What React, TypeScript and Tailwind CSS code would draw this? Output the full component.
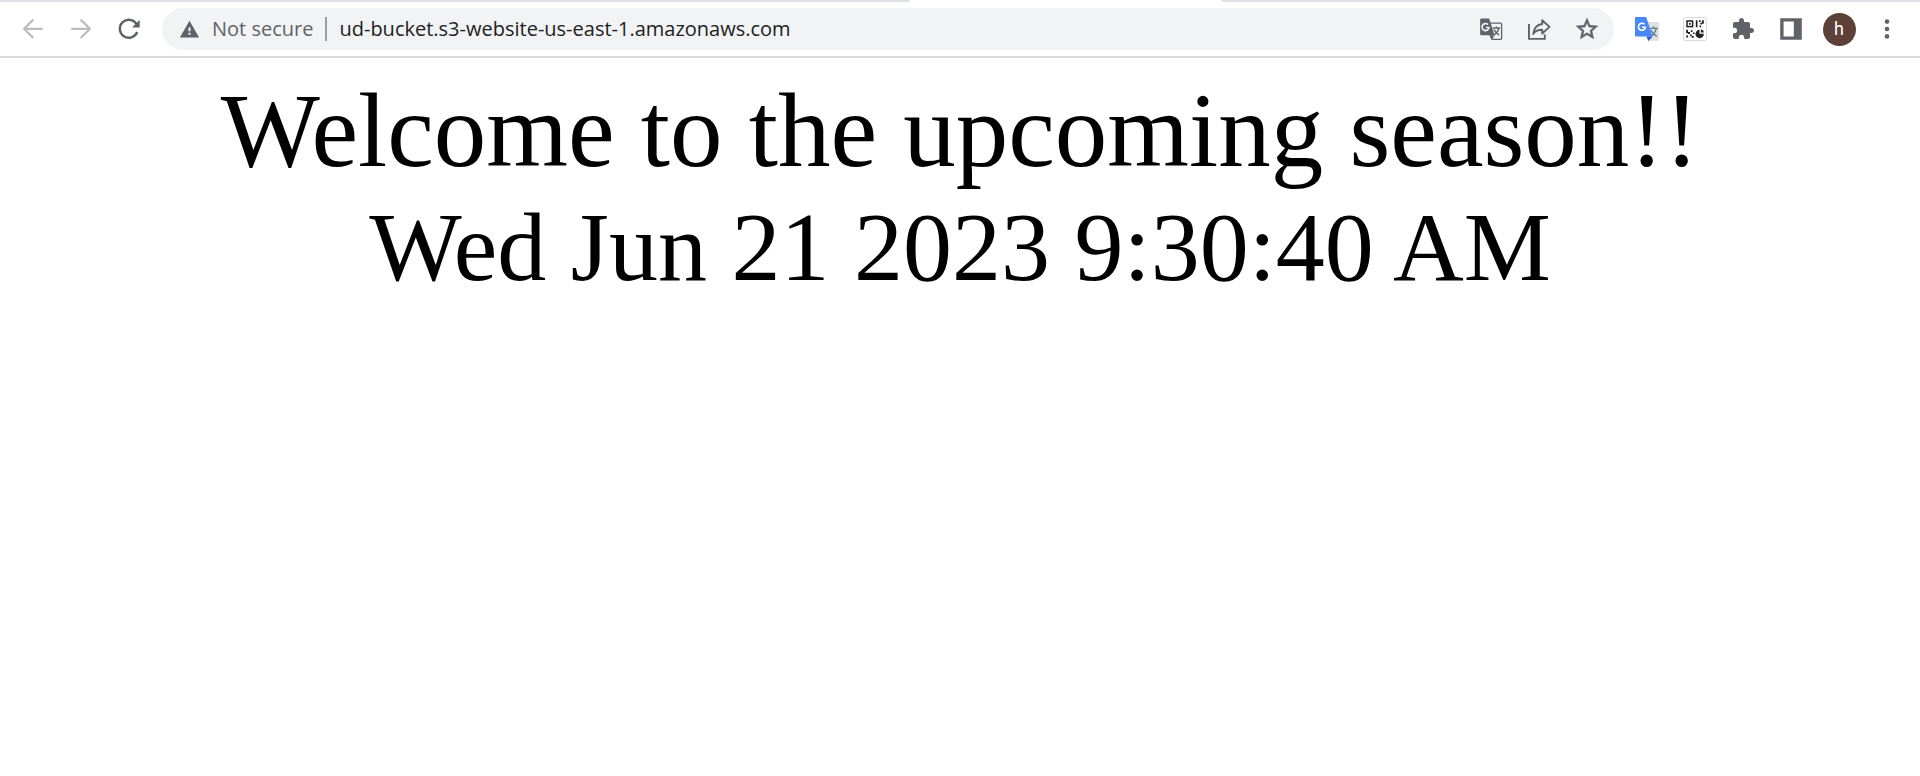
import type { ReactNode } from "react";

function IconButton({ label, disabled, children }: { label: string; disabled?: boolean; children: ReactNode }) {
  return (
    <button
      type="button"
      aria-label={label}
      disabled={disabled}
      className="flex h-10 w-12 shrink-0 items-center justify-center text-[#5f6368] disabled:text-[#babcbe]"
    >
      {children}
    </button>
  );
}

const icon = "size-6 shrink-0";

function BackIcon() {
  return (
    <svg className={icon} viewBox="0 0 24 24" fill="none" stroke="currentColor" strokeWidth="2.2">
      <path d="M21.7 11.8H3.6M12.3 2.6L3.1 11.8l9.2 9.2" />
    </svg>
  );
}

function ForwardIcon() {
  return (
    <svg className={icon} viewBox="0 0 24 24" fill="none" stroke="currentColor" strokeWidth="2.2">
      <path d="M2.3 11.8h18.1M11.7 2.6l9.2 9.2-9.2 9.2" />
    </svg>
  );
}

function ReloadIcon() {
  return (
    <svg className={icon} viewBox="0 0 24 24" fill="none">
      <path d="M19.6 7.2A9 9 0 1 0 20.2 15" stroke="currentColor" strokeWidth="2.4" />
      <path d="M22.7 2.8v7.6h-7.6z" fill="currentColor" />
    </svg>
  );
}

function WarningIcon() {
  return (
    <svg className="size-[21px] shrink-0" viewBox="0 0 24 24" fill="currentColor">
      <path d="M1 21h22L12 2 1 21zm12.2-3h-2.4v-2.2h2.4V18zm0-4h-2.4v-4.2h2.4V14z" />
    </svg>
  );
}

function TranslatePageIcon() {
  return (
    <svg className={icon} viewBox="0 0 24 24" fill="none">
      <path d="M11 6.2h10.4c.7 0 1.2.5 1.2 1.2v13.8c0 .7-.5 1.2-1.2 1.2H13l-2-4.6" stroke="currentColor" strokeWidth="1.3" />
      <path d="M2.6 1.4h7.6L15.6 18.2H2.6c-.9 0-1.5-.6-1.5-1.5V2.9c0-.9.6-1.5 1.5-1.5z" fill="currentColor" />
      <path d="M10.6 18.2h5L13 22.4z" fill="currentColor" />
      <path d="M9 7.6a3.5 3.5 0 1 0 1 2.9H6.8" stroke="#f1f3f4" strokeWidth="1.6" />
      <path d="M13.8 11h7.4M17.4 9.4V11M19.8 11c-.6 3-2.4 5.4-5 7M15 12.6c1 2.4 2.8 4.200 5.200 5.500" stroke="currentColor" strokeWidth="1.4" />
    </svg>
  );
}

function ShareIcon() {
  return (
    <svg className={icon} viewBox="0 0 24 24" fill="none" stroke="currentColor" strokeWidth="1.9">
      <path d="M2 7v14.900h15.800v-4.300" />
      <path d="M15.200 3.300l7.300 6.600-7.300 6.600v-3.700c-4 0-7 .9-9 4.100.6-5.400 3.700-9.200 9-9.900V3.300z" strokeLinejoin="round" />
    </svg>
  );
}

function StarIcon() {
  return (
    <svg className="size-[26px] shrink-0" viewBox="0 0 24 24" fill="currentColor" stroke="currentColor" strokeWidth=".5">
      <path d="M22 9.240l-7.190-.620L12 2 9.190 8.630 2 9.240l5.460 4.730L5.820 21 12 17.270 18.180 21l-1.630-7.030L22 9.240zM12 15.400l-3.760 2.270 1-4.280-3.320-2.880 4.380-.380L12 6.100l1.710 4.040 4.380.380-3.320 2.880 1 4.280L12 15.400z" />
    </svg>
  );
}

function GoogleTranslateIcon() {
  return (
    <svg className={icon} viewBox="0 0 24 24" fill="none">
      <path d="M9 5h14.200c.5 0 .8.300.8.800v17.400c0 .5-.3.800-.8.800H13z" fill="#dfe0e1" />
      <path d="M14.500 11.400h8.300M18.700 9.200v2.200M21.300 11.400c-.7 3.400-2.700 6-5.600 7.900M16 13.200c1.200 2.600 3 4.600 5.800 6.200" stroke="#607d8b" strokeWidth="1.400" />
      <path d="M11.400 19.400h6.200L13.400 24z" fill="#3155c9" />
      <path d="M.8 0h10.400l6.400 19.400H.8c-.5 0-.8-.3-.8-.8V.8C0 .3.300 0 .8 0z" fill="#4788f4" />
      <path d="M9.400 7.300a3.500 3.500 0 1 0 1 2.900H7" stroke="#fff" strokeWidth="1.600" />
    </svg>
  );
}

function QrIcon() {
  return (
    <svg className={icon} viewBox="0 0 24 24" fill="none">
      <rect x=".5" y=".5" width="23" height="23" rx="1.500" fill="#fff" stroke="#dadada" />
      <rect x="4" y="4" width="5.600" height="5.600" stroke="#202124" strokeWidth="1.500" />
      <path
        fill="#202124"
        d="M6 6h1.700v1.700H6zM12.800 3.200h1.700v7h-1.700zM16 3.200h1.700v1.700H16zM19 3.200h1.800v3.600H19zM17.300 5.800H19v1.700h-1.700zM16.500 8.500h1.700v1.700h-1.700zM3.200 12.800h1.800v3.500H3.200zM5 15h2v2H5zM7.800 13.200h1.700v1.700H7.800zM3.200 18.500H5v2H3.200zM7 17.500h1.700v1.700H7zM8.700 19h2v1.700h-2zM10 15.500h1.500v1.500H10z"
      />
      <path d="M16.500 12.800v3.900h4.300a4.200 4.200 0 1 1-4.300-3.900z" fill="#202124" />
      <path d="M17.800 12.500a3.200 3.200 0 0 1 3 3h-3z" fill="#202124" />
    </svg>
  );
}

function PuzzleIcon() {
  return (
    <svg className={icon} viewBox="0 0 24 24" fill="currentColor">
      <path d="M20.500 11H19V7c0-1.100-.9-2-2-2h-4V3.500C13 2.120 11.880 1 10.500 1S8 2.120 8 3.500V5H4c-1.100 0-1.990.9-1.990 2v3.800H3.500c1.490 0 2.700 1.210 2.700 2.700s-1.210 2.700-2.700 2.700H2V20c0 1.100.9 2 2 2h3.800v-1.500c0-1.490 1.210-2.700 2.700-2.700 1.490 0 2.700 1.210 2.700 2.700V22H17c1.100 0 2-.9 2-2v-4h1.500c1.380 0 2.500-1.120 2.500-2.500S21.880 11 20.500 11z" />
    </svg>
  );
}

function SidePanelIcon() {
  return (
    <svg className={icon} viewBox="0 0 24 24" fill="currentColor" fillRule="evenodd">
      <path d="M1.200 1.200h21.600v21.600H1.200V1.200zM4.600 4.600v14.800h10.200V4.600z" />
    </svg>
  );
}

function MenuIcon() {
  return (
    <svg className={icon} viewBox="0 0 24 24" fill="currentColor">
      <circle cx="12" cy="4.600" r="2.300" />
      <circle cx="12" cy="12" r="2.300" />
      <circle cx="12" cy="19.400" r="2.300" />
    </svg>
  );
}

export default function App() {
  return (
    <div className="min-h-screen bg-white">
      <header className="border-b-2 border-[#dadada]">
        <div className="flex h-0.5 bg-[#dee1e6]">
          <div className="w-[909px]" />
          <div className="w-[313px] rounded-t-sm bg-white" />
        </div>
        <div className="flex h-[54px] items-center px-[9px]">
          <nav aria-label="History" className="flex">
            <IconButton label="Back" disabled>
              <BackIcon />
            </IconButton>
            <IconButton label="Forward" disabled>
              <ForwardIcon />
            </IconButton>
            <IconButton label="Reload">
              <ReloadIcon />
            </IconButton>
          </nav>
          <div className="mx-[9px] flex h-[42px] min-w-0 flex-1 items-center rounded-full bg-[#f1f3f4] pr-[3px] pl-[17px] font-['Open_Sans',sans-serif] text-[20px] leading-7">
            <button type="button" className="flex shrink-0 items-center gap-3 text-[#5f6368]">
              <WarningIcon />
              Not secure
            </button>
            <span className="mx-3 h-6 w-0.5 shrink-0 bg-[#9aa0a6]" />
            <input
              type="text"
              aria-label="Address"
              defaultValue="ud-bucket.s3-website-us-east-1.amazonaws.com"
              className="min-w-0 flex-1 bg-transparent text-[#202124] outline-none"
            />
            <IconButton label="Translate this page">
              <TranslatePageIcon />
            </IconButton>
            <IconButton label="Share">
              <ShareIcon />
            </IconButton>
            <IconButton label="Bookmark">
              <StarIcon />
            </IconButton>
          </div>
          <div className="flex">
            <IconButton label="Google Translate">
              <GoogleTranslateIcon />
            </IconButton>
            <IconButton label="QR code">
              <QrIcon />
            </IconButton>
            <IconButton label="Extensions">
              <PuzzleIcon />
            </IconButton>
            <IconButton label="Side panel">
              <SidePanelIcon />
            </IconButton>
            <IconButton label="Profile">
              <span className="flex size-[33px] items-center justify-center rounded-full bg-[#5d4037] font-[Roboto,sans-serif] text-[18px] leading-none text-white">
                h
              </span>
            </IconButton>
            <IconButton label="Menu">
              <MenuIcon />
            </IconButton>
          </div>
        </div>
      </header>
      <main className="pt-[13px] text-center font-['Liberation_Serif',serif] text-black">
        <h1 className="text-[105px] leading-[120px]">Welcome to the upcoming season!!</h1>
        <p className="text-[98px] leading-[112px]">Wed Jun 21 2023 9:30:40 AM</p>
      </main>
    </div>
  );
}
